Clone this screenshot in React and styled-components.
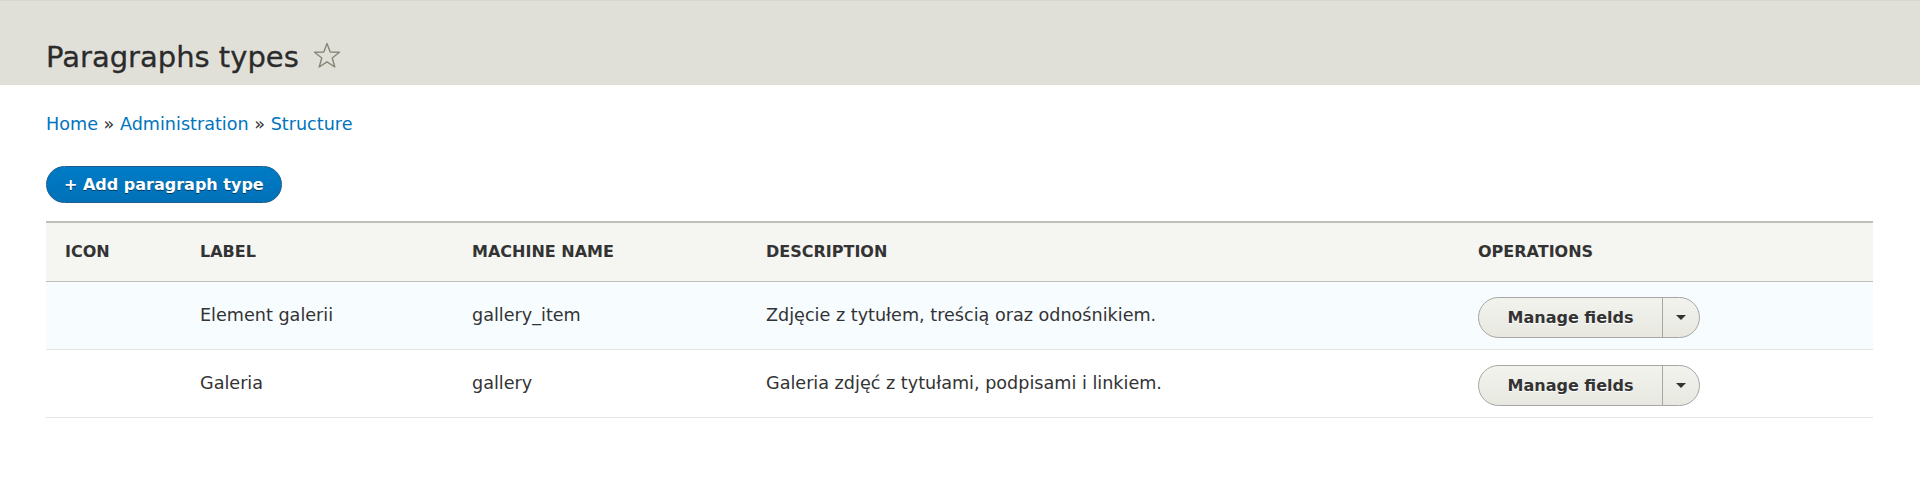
import React from "react";
import styled, { createGlobalStyle } from "styled-components";

const GlobalStyle = createGlobalStyle`
  body {
    margin: 0;
    background: #fff;
    font-family: "DejaVu Sans", "Liberation Sans", sans-serif;
    color: #333;
  }
`;

const PageHeader = styled.header`
  box-sizing: border-box;
  height: 85px;
  padding: 38px 46px 0;
  background: #e0e0d8;
  border-top: 1px solid #d8d8d0;
`;

const TitleRow = styled.div`
  display: flex;
  align-items: center;
`;

const Title = styled.h1`
  margin: 0;
  font-size: 29px;
  font-weight: normal;
  line-height: 36px;
  color: #2b2b2b;
  -webkit-text-stroke: 0.3px #2b2b2b;
`;

const Star = styled.svg`
  margin-left: 14px;
  margin-top: -3px;
`;

const Main = styled.main`
  padding: 0 47px 0 46px;
`;

const Breadcrumb = styled.nav`
  margin-top: 27px;
  font-size: 17.6px;
  line-height: 24px;
  color: #333;
`;

const Crumb = styled.a`
  color: #0074bd;
  text-decoration: none;
`;

const AddButton = styled.a`
  display: inline-flex;
  align-items: center;
  box-sizing: border-box;
  margin-top: 30px;
  height: 37px;
  padding: 0 17px;
  border: 1px solid #1e5c90;
  border-radius: 20px;
  background: linear-gradient(#007bc6, #0071b8);
  color: #fff;
  font-size: 16px;
  font-weight: bold;
  text-shadow: 0 1px rgba(0, 0, 0, 0.5);
  text-decoration: none;
`;

const Table = styled.table`
  margin-top: 18px;
  width: 100%;
  border-collapse: collapse;
  table-layout: fixed;
`;

const Th = styled.th`
  box-sizing: border-box;
  width: ${(p) => p.w};
  height: 59px;
  padding: 0 19px;
  text-align: left;
  font-size: 16px;
  font-weight: bold;
  text-transform: uppercase;
  color: #333;
  background: #f5f5f2;
  border-top: 2px solid #bfbfba;
  border-bottom: 1px solid #bfbfba;
`;

const Tr = styled.tr`
  background: ${(p) => (p.hl ? "#f7fcff" : "#fff")};
  border-bottom: 1px solid #e6e4df;
`;

const Td = styled.td`
  height: 67px;
  padding: 0 19px;
  font-size: 17.6px;
  color: #333;
  vertical-align: middle;
`;

const DropButton = styled.div`
  display: inline-flex;
  box-sizing: border-box;
  height: 41px;
  margin-top: 5px;
  border: 1px solid #a6a6a6;
  border-radius: 21px;
  background: linear-gradient(#f3f3ee, #e8e8e1);
  overflow: hidden;
`;

const DropMain = styled.span`
  display: flex;
  align-items: center;
  justify-content: center;
  width: 183px;
  font-size: 16px;
  font-weight: bold;
  color: #333;
  text-shadow: 0 1px #fff;
  border-right: 1px solid #a6a6a6;
`;

const DropToggle = styled.span`
  display: flex;
  align-items: center;
  justify-content: center;
  width: 36px;
`;

const Arrow = styled.span`
  width: 0;
  height: 0;
  border-left: 5px solid transparent;
  border-right: 5px solid transparent;
  border-top: 5px solid #333;
`;

const rows = [
  {
    label: "Element galerii",
    machine: "gallery_item",
    desc: "Zdjęcie z tytułem, treścią oraz odnośnikiem.",
    hl: true,
  },
  {
    label: "Galeria",
    machine: "gallery",
    desc: "Galeria zdjęć z tytułami, podpisami i linkiem.",
  },
];

export default function App() {
  return (
    <>
      <GlobalStyle />
      <PageHeader>
        <TitleRow>
          <Title>Paragraphs types</Title>
          <Star width="28" height="27" viewBox="0 0 28 27">
            <polygon
              points="14,1.5 17.2,10 26.5,10.3 19.2,16 21.8,25 14,19.8 6.2,25 8.8,16 1.5,10.3 10.8,10"
              fill="none"
              stroke="#868677"
              strokeWidth="1.4"
              strokeLinejoin="round"
            />
          </Star>
        </TitleRow>
      </PageHeader>
      <Main>
        <Breadcrumb>
          <Crumb href="#">Home</Crumb> » <Crumb href="#">Administration</Crumb> »{" "}
          <Crumb href="#">Structure</Crumb>
        </Breadcrumb>
        <AddButton href="#">+ Add paragraph type</AddButton>
        <Table>
          <thead>
            <tr>
              <Th w="135px">Icon</Th>
              <Th w="272px">Label</Th>
              <Th w="294px">Machine name</Th>
              <Th w="712px">Description</Th>
              <Th>Operations</Th>
            </tr>
          </thead>
          <tbody>
            {rows.map((r) => (
              <Tr key={r.machine} hl={r.hl}>
                <Td />
                <Td>{r.label}</Td>
                <Td>{r.machine}</Td>
                <Td>{r.desc}</Td>
                <Td>
                  <DropButton>
                    <DropMain>Manage fields</DropMain>
                    <DropToggle>
                      <Arrow />
                    </DropToggle>
                  </DropButton>
                </Td>
              </Tr>
            ))}
          </tbody>
        </Table>
      </Main>
    </>
  );
}
